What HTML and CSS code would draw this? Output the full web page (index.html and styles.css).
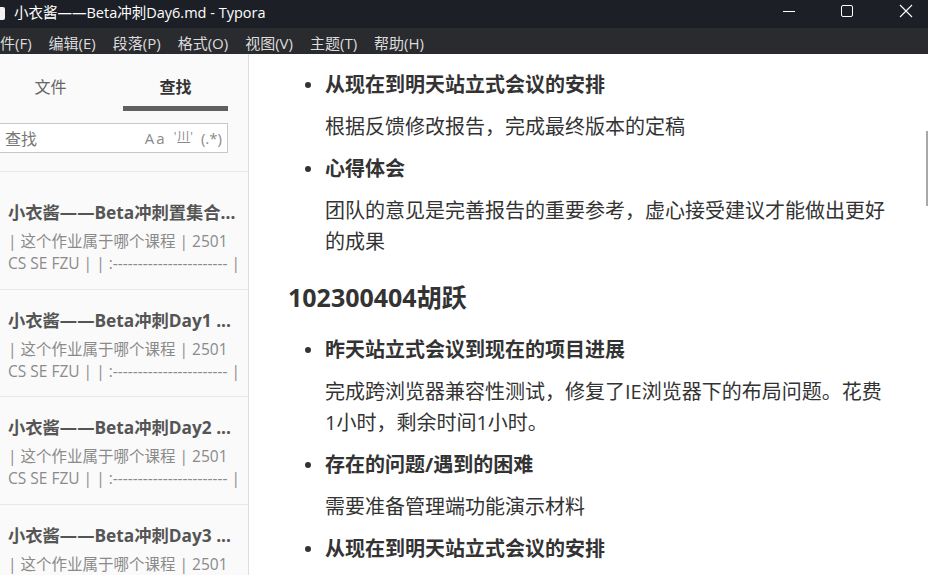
FILE: index.html
```html
<!DOCTYPE html>
<html lang="zh">
<head>
<meta charset="utf-8">
<title>Typora</title>
<link rel="stylesheet" href="styles.css">
</head>
<body>
<div class="window">
  <div class="titlebar">
    <div class="app-icon"></div>
    <div class="title">小衣酱——Beta冲刺Day6.md - Typora</div>
    <div class="controls">
      <div class="ctl">
        <svg width="14" height="14" viewBox="0 0 14 14"><path d="M1 7.5H13" stroke="#fff" stroke-width="1"/></svg>
      </div>
      <div class="ctl max">
        <svg width="14" height="14" viewBox="0 0 14 14"><rect x="1.5" y="1.5" width="11" height="11" rx="1.5" fill="none" stroke="#fff" stroke-width="1"/></svg>
      </div>
      <div class="ctl close">
        <svg width="14" height="14" viewBox="0 0 14 14"><path d="M1 1L13 13M13 1L1 13" stroke="#fff" stroke-width="1.1"/></svg>
      </div>
    </div>
  </div>
  <div class="menubar">
    <span class="menu">件(F)</span>
    <span class="menu">编辑(E)</span>
    <span class="menu">段落(P)</span>
    <span class="menu">格式(O)</span>
    <span class="menu">视图(V)</span>
    <span class="menu">主题(T)</span>
    <span class="menu">帮助(H)</span>
  </div>
  <div class="main">
    <aside class="sidebar">
      <div class="tabs">
        <div class="tab">文件</div>
        <div class="tab active">查找</div>
      </div>
      <div class="search-area">
        <div class="search">
          <span class="placeholder">查找</span>
          <span class="opts"><span class="aa">Aa</span><span class="word">'<u>川</u>'</span><span class="rx">(.*)</span></span>
        </div>
      </div>
      <div class="list">
        <div class="item">
          <div class="item-title">小衣酱——Beta冲刺置集合...</div>
          <div class="item-ex">| 这个作业属于哪个课程 | 2501<br>CS SE FZU | | :----------------------- |</div>
        </div>
        <div class="item">
          <div class="item-title">小衣酱——Beta冲刺Day1 ...</div>
          <div class="item-ex">| 这个作业属于哪个课程 | 2501<br>CS SE FZU | | :----------------------- |</div>
        </div>
        <div class="item">
          <div class="item-title">小衣酱——Beta冲刺Day2 ...</div>
          <div class="item-ex">| 这个作业属于哪个课程 | 2501<br>CS SE FZU | | :----------------------- |</div>
        </div>
        <div class="item">
          <div class="item-title">小衣酱——Beta冲刺Day3 ...</div>
          <div class="item-ex">| 这个作业属于哪个课程 | 2501<br>CS SE FZU | | :----------------------- |</div>
        </div>
      </div>
    </aside>
    <main class="content">
      <ul class="blist">
        <li><p class="b">从现在到明天站立式会议的安排</p><p>根据反馈修改报告，完成最终版本的定稿</p></li>
        <li><p class="b">心得体会</p><p>团队的意见是完善报告的重要参考，虚心接受建议才能做出更好的成果</p></li>
      </ul>
      <h3 class="h">102300404胡跃</h3>
      <ul class="blist">
        <li><p class="b">昨天站立式会议到现在的项目进展</p><p>完成跨浏览器兼容性测试，修复了IE浏览器下的布局问题。花费1小时，剩余时间1小时。</p></li>
        <li><p class="b">存在的问题/遇到的困难</p><p>需要准备管理端功能演示材料</p></li>
        <li><p class="b">从现在到明天站立式会议的安排</p></li>
      </ul>
      <div class="scroll-thumb"></div>
    </main>
  </div>
</div>
</body>
</html>
```

FILE: styles.css
```css
html, body {
  margin: 0;
  padding: 0;
  width: 928px;
  height: 575px;
  overflow: hidden;
  background: #fff;
}
.window {
  display: flex;
  flex-direction: column;
  width: 928px;
  height: 575px;
  font-family: "Open Sans", "Noto Sans CJK SC", sans-serif;
}
.titlebar {
  height: 28px;
  background: #1d1f27;
  display: flex;
  align-items: center;
  color: #fff;
  flex: none;
}
.app-icon {
  width: 5px;
  height: 13px;
  background: #f2f2f2;
  border-radius: 0 2px 2px 0;
  margin-right: 9px;
  margin-top: -2px;
}
.title {
  font-size: 14.5px;
  line-height: 28px;
  white-space: nowrap;
  margin-top: -3px;
}
.controls {
  margin-left: auto;
  display: flex;
  height: 28px;
}
.ctl {
  width: 58px;
  display: flex;
  align-items: center;
  justify-content: center;
  margin-top: -6px;
}
.ctl.max {
  margin-right: 6px;
}
.ctl.close {
  width: 46px;
  justify-content: flex-start;
  padding-left: 17px;
  box-sizing: border-box;
}
.menubar {
  height: 26px;
  background: #2a2b2e;
  color: #dcdcdc;
  display: flex;
  align-items: center;
  font-size: 15px;
  flex: none;
  white-space: nowrap;
}
.menu {
  margin-right: 17px;
  line-height: 26px;
  margin-top: 3px;
}
.main {
  flex: 1;
  display: flex;
  min-height: 0;
}
.sidebar {
  width: 248px;
  flex: none;
  background: #fafafa;
  border-right: 1px solid #dedede;
  overflow: hidden;
}
.tabs {
  display: flex;
  height: 57px;
  gap: 20px;
  margin-left: -2px;
}
.tab {
  width: 105px;
  text-align: center;
  font-size: 16px;
  color: #666;
  line-height: 20px;
  padding-top: 23px;
  box-sizing: border-box;
}
.tab.active {
  color: #333;
  font-weight: 700;
  border-bottom: 5px solid #606060;
}
.search-area {
  padding-top: 12px;
  height: 61px;
  box-sizing: border-box;
  border-bottom: 1px solid #e8e8e8;
}
.search {
  margin-left: -10px;
  width: 238px;
  height: 30px;
  box-sizing: border-box;
  border: 1px solid #c8c8c8;
  background: #fff;
  display: flex;
  align-items: center;
  padding-left: 14px;
  padding-right: 5px;
}
.placeholder {
  font-size: 16px;
  color: #777;
}
.opts {
  margin-left: auto;
  color: #8a8a8a;
  font-size: 15px;
  display: flex;
  align-items: center;
  gap: 7px;
}
.aa {
  letter-spacing: 2px;
}
.word {
  font-size: 12px;
  margin-top: -4px;
  letter-spacing: 1px;
}
.word u {
  text-decoration: underline;
}
.list {
  padding-top: 10px;
}
.item {
  height: 107.5px;
  box-sizing: border-box;
  border-bottom: 1px solid #e8e8e8;
  padding: 20px 0 0 8px;
}
.item-title {
  font-size: 17.3px;
  font-weight: 700;
  color: #555;
  line-height: 22px;
  white-space: nowrap;
  overflow: hidden;
}
.item-ex {
  margin-top: 6px;
  font-size: 15.5px;
  color: #8a8a8a;
  line-height: 22px;
  white-space: nowrap;
}
.content {
  flex: 1;
  position: relative;
  padding: 15px 0 0 39px;
  color: #333;
  overflow: hidden;
}
.blist {
  margin: 0;
  padding-left: 37px;
  list-style: none;
}
.blist li {
  position: relative;
  margin-bottom: 11px;
}
.blist li::before {
  content: "";
  position: absolute;
  left: -20px;
  top: 13px;
  width: 6px;
  height: 6px;
  border-radius: 50%;
  background: #333;
}
.blist p {
  margin: 0;
  font-size: 20px;
  line-height: 31px;
  padding-right: 40px;
}
.blist p + p {
  margin-top: 11px;
}
.blist p.b {
  font-weight: 700;
}
.h {
  margin: 20px 0 17px 0;
  font-size: 25px;
  line-height: 40px;
  font-weight: 700;
  color: #333;
}
.scroll-thumb {
  position: absolute;
  right: 0;
  top: 77px;
  width: 2px;
  height: 75px;
  background: #a8a8a8;
}
```
